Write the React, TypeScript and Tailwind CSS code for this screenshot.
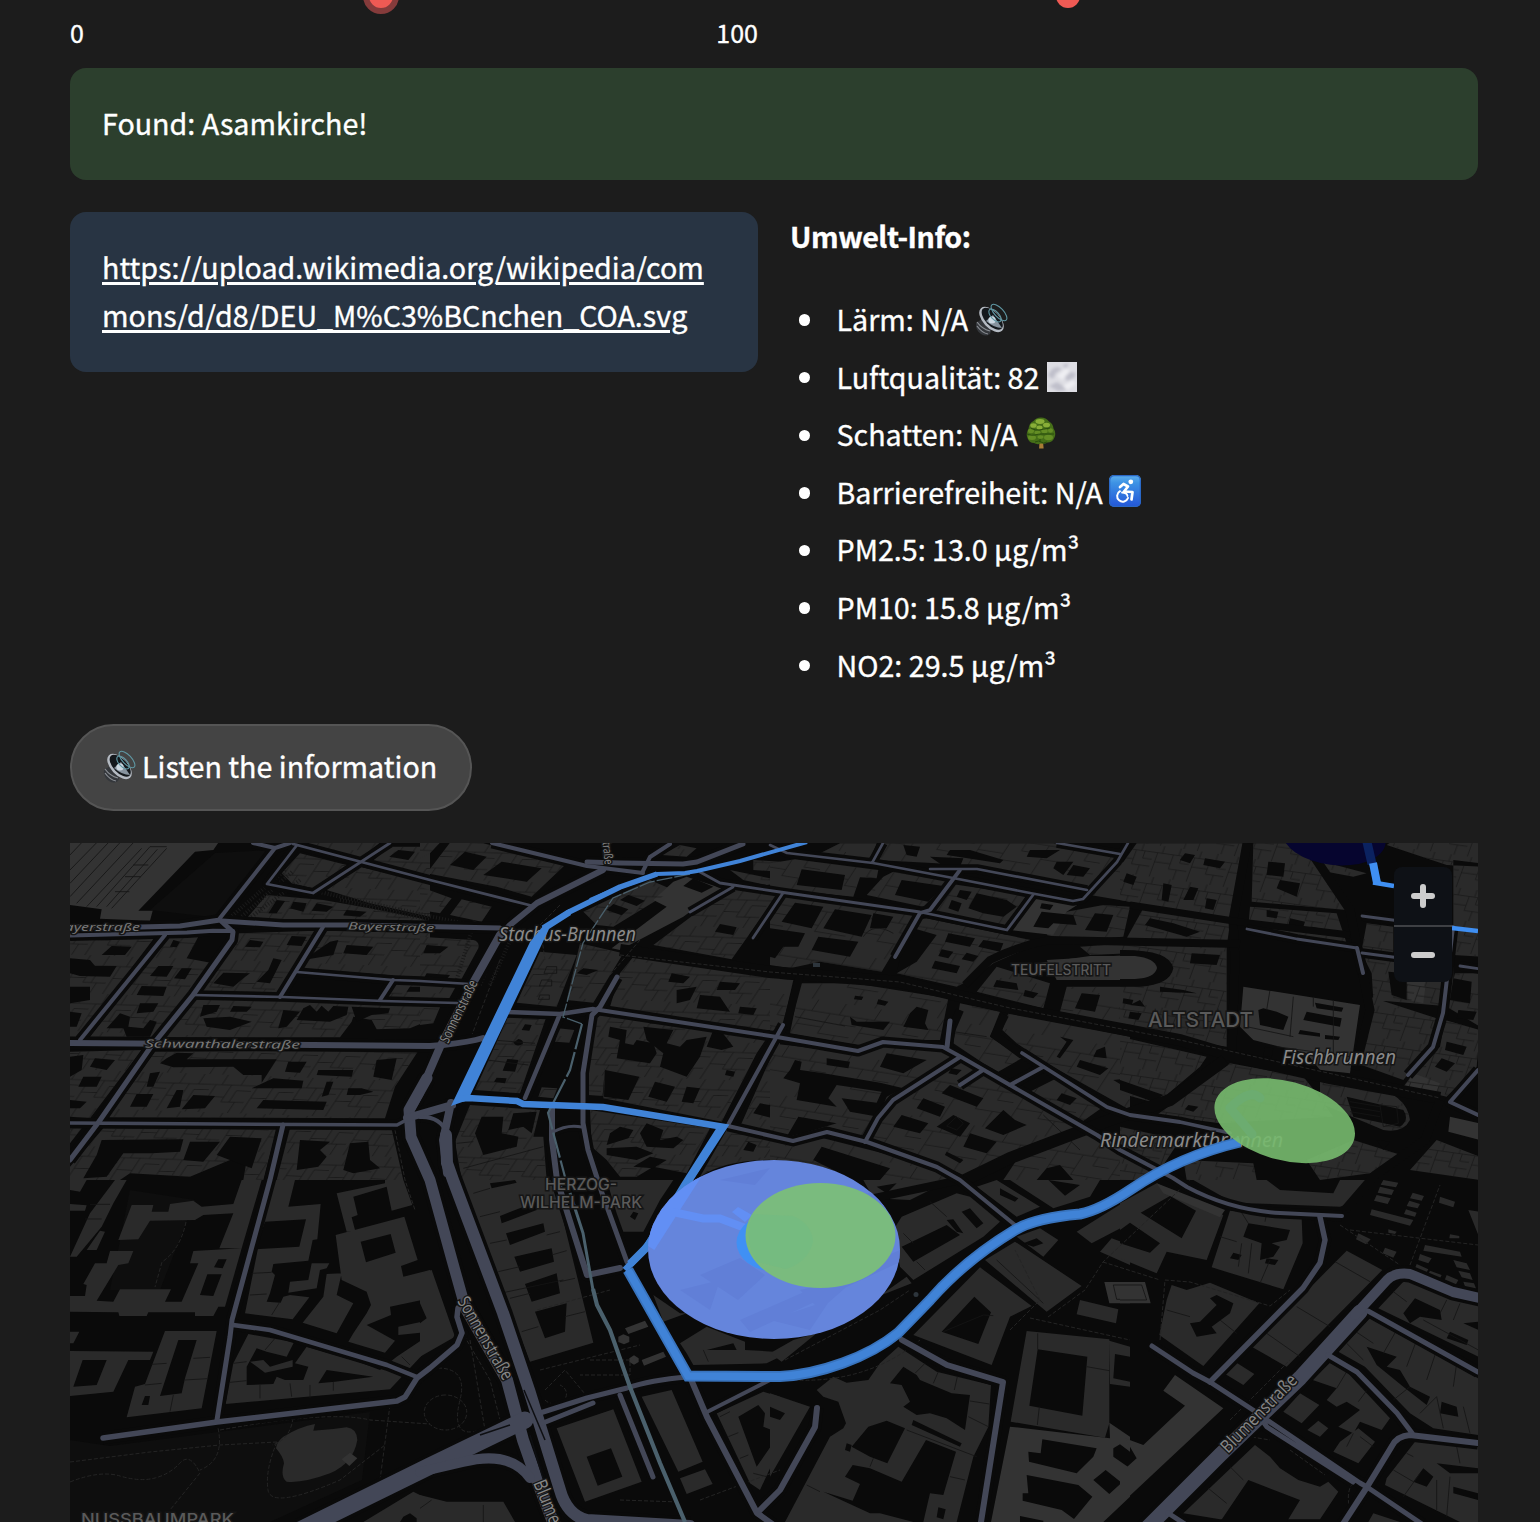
import type { ReactNode } from 'react';

interface Tile {
    x: number;
    y: number;
    parcels: string;
    blocks: string;
    bright?: string;
    courts: string;
    seams?: string;
}

interface Road {
    d: string;
    w: number;
}

// Building footprints, one entry per map tile, three units to a pixel
const TILES: Tile[] = [
    {
        x: 70,
        y: 840,
        parcels: 'url(#parcels-west)',
        blocks:
            'M690 40L830 75L730 145L665 130L635 100ZM700 8L930 8L870 55L800 40L720 25ZM870 80L1080 130V230L900 190L770 150ZM960 20L1080 20V110L905 65ZM590 165L760 180L900 205L1050 235L1080 245H850L530 235ZM0 300L250 297L25 598H0ZM295 290L385 280L470 285V310L290 590L60 590ZM500 280L735 272L625 460L380 455ZM765 272L1080 280V415L690 385ZM985 425L1080 425V475L945 478ZM365 475L840 485L1080 490V540L1020 565L920 568L905 540L850 530L845 545L810 592L290 592ZM0 635L215 630L60 835L0 830ZM255 635L1045 632L975 740L945 835L115 832ZM100 865L620 868L580 1020H520L530 960H480L360 1010L180 1000L150 1020H0V980ZM660 865L965 868L1000 1020H620ZM0 865H35L0 910Z',
        bright: 'M0 8L445 8L430 30L375 35L205 212L248 212L240 242L90 236L95 208L0 195Z',
        courts:
            'M985 30L1035 35L1015 60L958 50ZM620 180L645 183L620 220H595ZM670 185L710 190L700 215L660 205ZM740 190L790 200L770 215L725 212ZM830 210L890 215L870 230L820 226ZM125 318L185 320L165 345H95ZM0 355L60 360L75 378H140L120 410L30 408L0 400ZM0 440H60V480L0 490ZM0 515L35 520L20 560H0ZM310 300L330 305L320 322L300 320ZM390 280L480 285L475 310L430 370L350 355L375 310ZM265 378H310L290 410L240 408ZM335 385H365L345 418L312 415ZM215 438L290 440L280 468L200 465ZM210 490H265L250 515L200 520ZM150 520L180 530L175 560L220 565L240 540L260 545L240 590H170L160 565H110ZM540 300L580 305L570 322L525 320ZM665 288L710 290L695 318L650 315ZM460 398L540 400L520 415L490 440L430 430ZM610 355L635 360L600 430L560 425L595 390ZM830 315L910 320L890 345L820 340ZM780 305L805 300L790 345L700 360ZM1020 440H1080V455H1010ZM400 495H450L440 515L390 530ZM490 498L545 500L530 515H480ZM400 535L480 530L545 545L480 570L410 560ZM640 510L690 515L650 560L625 565ZM700 505L720 495L740 515L755 497L775 515L790 498L835 500L830 525L780 545L680 540ZM845 500L960 505L955 520L905 525L860 545ZM40 710H95L80 740H25ZM0 650L40 645L35 690L0 710ZM0 780L50 785L30 805H0ZM75 655L135 660L110 690L60 680ZM290 655L320 638L370 640L350 658L620 658L575 728L575 705L520 705L490 680L310 682L270 670ZM655 665H710L690 698L645 695ZM610 715L700 722L695 745L545 745ZM745 690H850L845 710L740 705ZM770 725H790L775 765L755 770ZM835 745H875L910 755L870 765H830ZM920 660L980 655L965 720L910 710ZM320 750H340L330 800L290 805ZM370 765L435 768L405 805L335 808ZM200 762H250L230 800H180ZM580 780L770 785L760 810L560 805ZM240 700L270 695L250 740L230 740ZM95 900L340 898L330 935L245 940H160L110 1010L40 1015L80 945ZM360 905H450L400 965L340 960ZM480 890L575 895L545 985L440 945ZM690 900L780 905L750 930L770 950L745 980L680 990ZM840 910L895 905L900 960L930 985L850 1000L820 990Z',
        seams:
            'M80 200L240 20M110 200L262 28M125 205L290 25M240 20H290M190 75H235M165 110H212M135 155H178M0 170L150 8M20 190L190 8M50 200L215 25M0 45L35 8M0 90L80 8M0 130L115 8',
    },
    {
        x: 420,
        y: 840,
        parcels: 'url(#parcels-west)',
        blocks:
            'M90 8L190 10L400 65L435 75L335 170L230 140L20 100ZM0 8H60L30 40L0 55ZM0 140L95 175L60 220L0 210ZM125 178L215 200L185 245L90 225ZM0 290L160 300Q180 305 175 325L120 425L0 420ZM0 430L110 435L85 480L0 475ZM0 490H65L40 550L0 555ZM360 335L470 345L410 500L290 488ZM480 310L610 340L520 488L440 480ZM690 120L760 150L580 260L530 255L490 215ZM930 145L1075 160L935 358L700 315L820 225ZM1000 60L1080 65V95L1000 90ZM930 90L1050 115L1080 130L1040 135L970 120ZM780 15L830 25L800 50L725 45ZM640 350L900 385L1080 415V570H980L570 500L600 400ZM270 518L380 528L300 760L165 750ZM415 565L463 570L448 608L405 605ZM365 742L412 745L400 775L355 770ZM530 520L1040 595L1010 640L905 845L550 775L555 680L548 768L505 765V645L515 570ZM150 795L360 810L340 890H370L380 1020H125L105 905ZM510 810L870 865L800 1000L700 980L650 1010H600L560 960L515 920ZM920 870L1080 900V960Q920 955 840 1010ZM1080 590V900L960 860ZM1080 240V290L1050 240Z',
        bright: 'M800 110L905 145L790 230L600 330L575 325L740 200L700 180L760 125Z',
        courts:
            'M135 35L200 50L160 90L90 75ZM245 65L365 85L320 125L190 105ZM20 315L85 320L60 340H10ZM20 400L90 405L80 418H10ZM490 385L535 390L500 405L470 400ZM625 165L675 182L650 198L600 180ZM580 192L625 208L605 226L560 210ZM820 115L880 140L845 158L790 138ZM900 252L950 262L940 285L885 275ZM755 400L810 410L790 430L745 425ZM770 450L830 440L810 480L770 490ZM840 465L900 470L930 515L830 505ZM900 425L960 430L945 450H890ZM960 500L1010 505L1000 525L955 520ZM315 553L335 555L328 572L305 570ZM262 657L295 660L285 695L248 692ZM230 713L260 715L255 730L222 725ZM295 597Q312 600 308 612Q290 622 280 608ZM570 560L620 570L615 610L640 615L650 600L700 610L710 640L690 670L590 655L600 600L565 590ZM670 560L760 570L740 610L780 620L800 600L860 590L840 650L800 710L720 680L730 640L680 600ZM555 690L658 710L625 780L552 770ZM705 725L765 740L740 785L685 770ZM880 570L905 575L940 620L905 630L860 620ZM920 690L945 695L940 710L915 705ZM800 740L840 745L820 790L785 785ZM185 830H250L245 880L295 890L290 920L190 945L165 880ZM280 820L350 815L335 880L310 860L265 870ZM600 860L640 870L625 895L560 915L570 880ZM680 850L730 870L720 900L770 890L790 900L760 925L680 920L660 880ZM560 925L650 920L700 940L650 960L560 945ZM640 980L690 950L740 960L700 985ZM985 905L1010 915L1000 935L970 930ZM1020 790L1080 800V840L1000 820Z',
        seams: 'M380 380H410V400H372ZM365 420H395V438H358ZM360 465H388V478H355ZM215 600L345 610M200 660L325 675M110 910L160 905M130 985L370 920',
    },
    {
        x: 770,
        y: 840,
        parcels: 'url(#parcels-mid)',
        blocks:
            'M340 10L850 10L1050 45L950 150L640 85L500 70L315 60ZM210 10H320L300 60L150 40ZM75 58L325 90L320 115L270 112L250 170L0 145V70ZM380 90L540 120L460 200L290 165L340 110ZM40 165L440 220L335 395L150 365L60 385L0 375V230ZM530 130L770 165L700 265L490 220ZM1050 70L1080 60V185L960 165ZM890 215L1000 195L1080 200L1060 290L900 300L830 285ZM470 235L830 310L760 330L670 370L610 415L560 440L380 400L440 240ZM90 430L250 430L535 475L510 600H400L270 615L60 580ZM0 415L70 420L40 550L0 580ZM570 490L690 515L660 590L755 655L685 695L640 670L550 610ZM715 520L880 550L1080 590V810L830 670L740 610L697 570ZM680 380L840 430L820 505L620 455ZM890 440H1080V560L870 515ZM0 610L265 640L350 615L480 620L545 650L370 770L280 890L170 860L70 890L0 870ZM570 665L715 740L985 885L580 1005L500 970L300 905L330 840L390 775ZM760 765L860 715L1000 800L930 850ZM740 960L960 870L1080 940V1020H700ZM0 910L160 895L500 980L560 1020H250Q180 970 0 960ZM930 320L1080 310V340L960 345Z',
        bright: 'M800 165L930 190L890 215L850 285L720 270ZM830 360L1080 345V420H860Z',
        courts:
            'M400 15L450 20L440 50L410 45ZM480 50L580 55L570 80L520 78ZM780 30H870L830 55L770 50ZM860 65H910L880 105L850 85ZM910 75L960 85L940 110L890 105ZM540 30H600L700 60L690 70L530 45ZM95 88L225 105L215 150L80 135ZM395 120L520 138L475 185L375 165ZM75 188L160 200L125 265L35 245ZM195 208L305 225L275 290L160 265ZM145 290L265 305L240 350L125 330ZM0 265L105 280L85 320H40L15 355L0 350ZM310 220L370 230L350 265L300 265ZM570 150L605 155L590 180L560 170ZM620 160L710 180L740 200L700 230L640 220L595 205ZM545 180L575 190L565 215L535 205ZM815 215L910 225L920 255L850 250L835 265L790 260ZM975 220L1030 225L1010 275L945 270ZM815 190L850 195L840 210L810 205ZM430 265L500 285L440 365L380 400L395 330ZM535 280L615 295L600 320L525 305ZM515 328L550 335L535 355L505 348ZM495 362L570 378L560 400L485 385ZM590 338L625 348L610 365L575 358ZM640 300L700 310L690 335L625 320ZM240 530L260 545L360 545L340 570L245 555ZM440 500L475 510L465 550L475 570L400 560L420 520ZM325 478L355 485L345 497L320 492ZM255 467L280 470L275 480L252 478ZM930 660L1015 685L990 705L920 680ZM1030 720L1080 715V750ZM980 630L1005 620L1010 655L970 650ZM870 590L910 600L870 655L860 650L890 605ZM680 420L740 430L745 450L670 440ZM765 450L805 460L790 475L760 468ZM935 460L990 465L975 515L915 505ZM170 655L240 665L235 685L170 675ZM60 690L75 660L95 665L90 690L160 700L330 728L400 745L350 770L325 830L240 815L215 775L320 788L335 755L200 735L175 775L200 800L80 780L90 730L40 715ZM350 640L470 660L400 700L330 680ZM85 830L200 850L100 880L50 890ZM540 735L640 775L620 800L515 760ZM460 775L525 800L510 830L440 805ZM395 825L475 850L450 880L370 860ZM550 825L600 850L570 890L500 860ZM700 810L735 840L770 855L700 885L645 865ZM600 880L680 905L650 940L580 920ZM530 935L580 960L570 970L525 945ZM875 760L920 775L900 795L860 780ZM545 685L575 690L560 705L535 700ZM830 985L870 975L910 1020H800ZM155 920L360 985L330 1020H250L130 960Z',
        seams: 'M75 530L225 558M280 290Q310 245 370 280M550 575L650 590M820 825L930 930M560 830L580 850L560 870L530 858Z',
    },
    {
        x: 1120,
        y: 840,
        parcels: 'url(#parcels-east)',
        blocks:
            'M50 10H370L330 235L80 195L0 180V80ZM400 10H540L630 130L680 210L395 185ZM390 200L650 220L680 310L385 260ZM70 205L330 250L320 320L20 295ZM0 310L150 315L320 320V620L0 570ZM740 250L820 260V340L725 330ZM730 350H1000V500L760 480L755 400ZM1000 60L1080 70V350L1000 345ZM1005 400H1080V560L980 500ZM750 470L950 535L930 620L850 720L710 670L720 580ZM975 540L1080 570L1070 680L980 770L850 740L880 700L960 620ZM0 590L260 650L240 680L110 790L0 760ZM330 670L550 710L590 760L640 830L300 850L110 825ZM600 715L740 735Q860 760 870 840Q850 880 790 870L600 790ZM700 900L860 950L750 1000L600 1020L560 960ZM190 960L400 970L410 1020H200ZM950 900L1080 950V1020L870 990ZM800 15L980 75L1080 80V8H810ZM590 60L740 100L700 110L620 95ZM0 860L180 900L100 1020H0Z',
        bright: 'M370 440L720 495L690 700L600 690L560 640L400 600L360 560ZM990 830L1080 850V900L985 875ZM860 400L920 410L910 490L865 480ZM880 700L960 730L940 780L850 745Z',
        courts:
            'M195 40L225 45L210 70L180 60ZM255 55L315 65L300 85L250 75ZM130 130L155 135L145 185L125 180ZM210 140L235 145L220 180H190ZM260 175L290 180L280 210L255 205ZM20 100L50 110L40 135L10 125ZM445 65L495 70L490 110L440 105ZM480 120L540 130L530 170L470 145ZM440 210L475 215L470 235L440 230ZM510 235L555 245L550 260L505 255ZM575 260L625 270L620 285L570 280ZM90 235L160 250L240 275L200 290L75 255ZM0 330Q150 328 160 385Q150 435 60 440H0ZM215 340L300 345L290 375L210 370ZM120 440L190 450L230 460L120 455ZM60 480L75 500L30 495ZM10 475L40 480L35 495L8 490ZM30 515L65 520L55 540L25 535ZM415 510L430 505L470 515L505 530L490 570L420 555ZM560 515L665 535L660 560L550 540ZM585 488L670 503L665 515L590 505ZM540 570L600 580V590L535 582ZM615 585L660 590L655 600L615 597ZM435 620L460 625L455 652L430 648ZM1000 415L1055 425L1050 490L990 480ZM1015 510L1070 515L1060 540L1010 535ZM805 395L860 400L860 480L815 465ZM980 605L1040 620L1030 645L975 630ZM965 655L1005 670L980 695L945 680ZM0 720L130 765L100 785L0 750ZM205 795L235 800L220 815L195 808ZM680 770L850 810Q870 840 840 860L700 830ZM770 900L810 905L790 930Z',
        seams: 'M450 450L440 510M520 470L510 590M580 470V500M640 480V640M380 560L520 590M470 620L690 650M690 785L780 800M690 800L780 815M690 815L780 830M780 795L830 800L835 850L790 860Z',
    },
    {
        x: 70,
        y: 1180,
        parcels: 'none',
        blocks:
            'M0 0H50L30 35L0 30ZM0 72L50 76L45 92H0ZM135 0H170L130 70L95 140L20 230H0L60 100ZM90 152L105 155L80 210H50ZM185 75H250L245 95H295L300 72L370 62L395 80L490 72L515 0H575L515 205H448L490 100L400 105L375 120L240 122L205 178L145 180ZM120 213H190L175 250L145 255L80 362L130 365L150 328H303L285 365H335L385 250H360L370 213L515 205L465 380H445L430 408H375V397H235L230 408H148L145 397L0 395V348H45L50 315L40 312L75 250H110ZM0 455H28L10 490H0ZM0 513L250 515L240 540H175L130 635L0 648ZM285 453H440L395 685L170 712L195 620L225 612ZM610 0H675L655 80L752 72L742 178L728 180L715 242L610 252L605 275L615 285L600 340L590 365L632 368L640 350L660 345L718 352L668 418L525 400L580 125ZM800 40L945 10V0H1000L1027 75L965 92L950 20L850 50L863 105L845 112L855 150L830 155ZM797 165L1003 110L1043 240L993 258L1000 290L1080 270V355L960 380L963 405L890 435L975 482L945 518L835 485L850 460L890 400L903 375L890 335L815 300ZM725 250H778L770 265L750 270L740 325L655 338L660 305L715 300ZM770 282L815 280L800 345L850 370L800 460L698 428L760 350ZM985 440L1080 420V455L985 465ZM535 462L672 487L650 530L590 515L560 505L530 560V615L610 612L620 590L645 600L700 600L715 560L675 550L710 500L865 545L930 570L980 530L1070 470L1080 500L960 628L467 672L490 550ZM540 545L580 540L600 560L668 540V560L585 578ZM735 732Q690 740 640 770Q620 785 618 805Q640 830 642 850Q630 890 650 905Q700 910 780 880Q850 850 862 780Q860 745 830 742Q780 750 730 752ZM880 1026L1030 935L1080 960V1026Z',
        bright: 'M840 818L862 835L838 858L815 838Z',
        courts:
            'M445 238H470L458 265L432 262ZM412 283H455L430 348L390 345ZM38 540H110L80 615L10 620ZM325 480H380L345 595L335 640L270 648ZM225 648H240L235 675H215ZM585 125L708 118L688 200L557 208ZM872 185L962 162L977 218L888 247ZM770 570L910 590L795 605L745 610ZM1000 1010L1020 1000L1040 1015V1026H990Z',
        seams: 'M245 553L290 550M370 535L420 532M225 615L275 610M345 600L412 596M310 645L300 695M490 550L530 545M480 607L530 602M570 615V655M660 610L665 650M720 615V655M790 605V632M540 345L590 342M545 280L605 277M630 365L605 405M615 475L585 510M60 73H120M45 117H95M995 530L1020 555M1050 480L1080 500',
    },
    {
        x: 420,
        y: 1180,
        parcels: 'none',
        blocks:
            'M120 0H400L520 488L330 545ZM0 280L35 270L105 470L0 530ZM410 745L580 688L665 905L495 965ZM665 650L755 630L848 845L775 875ZM780 895L855 868L878 912L800 942ZM890 700L1030 635L1080 650V800L1020 930L990 910ZM0 945L80 965H250L285 1026H0ZM780 490L860 440L975 485V510L1060 515L1080 530L1040 550L820 555L800 520ZM700 345L780 400H800L730 425ZM560 0H760L720 60L670 155H610L590 100Z',
        bright: 'M595 470L610 463L628 470L628 486L612 493L595 486ZM628 535L642 526L656 535V546L642 554L628 546ZM615 445L675 422L685 440L625 462ZM665 540L730 515L738 530L672 557Z',
        courts:
            'M210 10L285 0L290 8L215 25ZM240 108L350 65V90L245 130ZM258 160L370 130L375 155L270 195ZM283 230L395 205L402 245L300 275ZM315 312L410 280L420 340L335 365ZM345 395L440 370L435 455L375 475ZM0 370L20 415L0 430ZM500 830L573 805L607 890L533 917ZM955 710L1015 675L1035 700L1030 740L1080 760L1010 860ZM860 510L940 490L950 510ZM640 95L655 100L645 120L630 110Z',
        seams:
            'M160 40L210 25M180 110L240 95M210 190L260 180M235 275L300 260M270 355L330 340M305 455L355 440M380 165L420 155M395 225L440 212M420 305L465 295M435 410L495 395M240 340L430 300M900 710L930 695M925 770L955 758M960 835L985 825M1000 880L1040 890M190 975V1026M0 985L35 960M850 510L865 545',
    },
    {
        x: 770,
        y: 1180,
        parcels: 'none',
        blocks:
            'M280 0H540L420 60L310 55ZM370 150L395 110L560 40L600 50L690 125L640 170L430 300L390 260ZM340 340L410 290L425 310L260 375ZM630 262L785 378L720 410L665 555L430 465ZM645 240L735 185L935 318L830 395ZM740 170L810 145L865 180L820 230ZM620 20L680 0L810 80L740 110ZM720 0H990L960 50L850 85ZM920 155L1080 55V130L965 190ZM1025 175L1080 195V255L990 215ZM930 360L1045 388L1038 430L920 403ZM770 453L1018 478V730L1005 773L722 725ZM1018 482L1080 500V620L1020 612ZM140 630L190 590L230 608L295 600L330 550L385 500L500 575L663 615L655 740L610 830L560 1026H460L480 940L520 945L558 815L468 780L395 905L300 865L248 855L225 890L270 912L248 962L160 935L300 1000L330 1000L430 1026H45L180 770L220 745L228 730L205 665L160 650ZM0 640L120 680L0 890ZM0 520L70 480L140 460L35 545Z',
        bright: 'M1003 306H1080V370H1018ZM720 740L1020 775L1018 728L1080 770V950L1000 1026H663Z',
        courts:
            'M320 20L380 10L350 40ZM395 200L530 135L570 165L430 245ZM575 95L600 85L640 130L620 145ZM530 120L550 118L580 160L560 155ZM613 350L663 397L625 492L515 455ZM760 190L800 175L820 190L790 200ZM690 25L745 55L735 65L690 45ZM835 0L930 15L885 47ZM803 508L952 530L937 707L778 677ZM1035 522L1080 530V605L1030 595ZM817 778L980 805L970 830L920 880L777 845L775 815L812 820ZM1030 805L1050 793L1080 815V865L1030 830ZM970 900L1007 870L1055 908L1018 942ZM770 885L925 915L967 950L912 1017L875 990L758 962V940H775ZM750 1008L820 1022V1026H750ZM295 740L350 722L405 745L352 850L300 830L245 800ZM400 560L440 585L450 600L545 640L600 645L585 750L530 715L480 700L440 705L400 680L420 665L395 615L360 610ZM430 720L575 790L570 800L425 735ZM230 790L245 795L240 815L225 810ZM505 982L527 988L520 1018L500 1012ZM0 680L45 700L30 720L0 710Z',
        seams:
            'M520 455L640 405L670 407M803 460V508M950 560L1018 572M808 680L802 735M435 580L465 550M490 610L505 575M553 630L562 590M600 663L658 672M595 710L655 740M540 890L585 900M300 860L310 835M110 915L150 935M410 750L620 830M400 160L430 190M440 245L465 270M480 65L530 110M680 240L820 370M1030 315H1080M1030 315L1040 358H1080',
    },
    {
        x: 1120,
        y: 1180,
        parcels: 'none',
        blocks:
            'M0 70L110 10L310 105L260 240L140 215L110 280L0 235ZM220 0H740L690 70L660 80L340 68ZM330 92L545 115L548 190L490 328L275 262ZM155 315L200 330L270 308L418 370L250 558L118 465L140 360ZM680 212L787 270L500 560L395 500ZM345 545L403 582L370 615L312 580ZM855 300L1075 360V530L775 385ZM750 415L1075 595V765L940 745L870 700L735 560L655 515ZM630 548L680 575L810 715L785 750L720 725L700 760L655 740L720 690L680 665L650 680L620 660L650 625L578 600ZM540 640L598 675L545 730L490 695ZM595 722L625 745L600 770L562 750ZM660 785L715 745L765 785L715 850L640 815ZM405 795L450 830L480 865L535 900L600 920L625 905L655 935L600 1018H300L190 1000ZM885 785L1075 800V1026H1020L795 915L800 895ZM755 88L880 120L870 137L750 105ZM715 160L752 178L738 193L708 178ZM795 203L830 215L820 233L788 220ZM915 195L1020 215L1025 230L910 212ZM960 50L1005 65L1000 82L957 68ZM1045 90L1075 95V165ZM790 0L835 8L828 22L782 14ZM780 20L822 30L815 45L773 38ZM770 45L812 55L803 72L762 62ZM878 38L912 48L905 62L870 55ZM868 62L900 72L893 85L860 78ZM858 88L890 98L885 110L852 102ZM900 222L935 235L925 250L895 240ZM890 252L925 268L915 285L883 270ZM930 272L965 285L955 305L920 290ZM980 285L1015 300L1005 318L972 305ZM1000 240L1040 250L1050 270L1010 262ZM1015 272L1050 280L1058 300L1025 292ZM1030 305L1062 310L1072 335L1038 328ZM760 1000L840 1026H745ZM805 148L830 155L825 162L805 158ZM990 163L1018 168V175H988Z',
        bright: 'M0 306H75L92 370H0ZM110 10L315 90L300 112L130 40ZM165 585L310 685L0 975V880L50 835L15 775L70 795L195 677L130 632Z',
        courts:
            'M62 98L150 48L228 92L185 175ZM0 150L30 128L120 190L90 218L0 190ZM440 0H660L640 40L480 30ZM385 130L510 150L500 180L455 190L480 200L460 230L420 240L425 190L370 170ZM340 218L365 225L355 240L330 235ZM440 235L475 240L465 255L435 250ZM270 355L290 345L340 370L330 400L275 440L290 460L230 470L210 430L240 425L290 375ZM885 355L960 390L965 420L900 410L870 430L850 400ZM990 455L1045 480L1040 495L980 475ZM1030 430L1075 425V450ZM740 500L770 510L830 530L800 560L840 570L870 620L930 650L920 675L850 620L770 555ZM965 665L1010 680L1015 710L960 700ZM385 900L540 960L500 1026H300ZM950 850L1075 865V880H990ZM910 865L940 890L920 920L880 905ZM1000 920L1075 940V960L1000 940Z',
        seams:
            'M645 245L750 305M530 380L630 440M440 460L540 530M0 315H65L80 360H0M360 90L385 130M440 100L435 125M300 170L350 185M365 190L355 260M395 190L385 280M450 240L420 310M140 390L210 410M300 420L350 460M820 335L860 365M980 360L960 400M1020 370L1000 420M910 420L1075 510M700 450L760 490M830 450L790 520M890 480L860 560M950 510L920 600M1010 550L1000 620M680 490L730 540M820 660L870 620M900 700L950 650L970 745M680 575L650 625M745 625L715 665M265 925L320 970M330 860L370 900M880 830L860 820M820 870L880 905M1010 800L1020 850M950 900V990M850 950L900 880M990 890L980 1010M1030 680L1050 760M700 760L680 800M720 770L760 800',
    },
];

const ROADS: Road[] = [
    { w: 4, d: 'M275 848L220 918M253 843L275 848L290 843' },
    { w: 5, d: 'M70 927H140L180 926L220 920L233 932L232 940L193 995L150 1048L98 1123L70 1160' },
    { w: 5, d: 'M222 921L283 925H350L500 928' },
    { w: 4, d: 'M70 935.5L187 932.6L213 930.7L233 931' },
    { w: 4, d: 'M165 935L80 1040M323 927L280 997M393 980L380 1000' },
    { w: 2.6, d: 'M193 995L283 997L383 1001L457 1003M297 972L393 980L420 981L470 984' },
    { w: 6, d: 'M70 1043L430 1046L443 1045Q470 1042 483 1038' },
    { w: 3.5, d: 'M70 1123L397 1125L410 1118' },
    { w: 5, d: 'M283 1125L270 1180L232 1320L230 1337L217 1420' },
    { w: 5.5, d: 'M103 1438L217 1422L397 1401L405 1397L417 1378L430 1368L457 1345L462 1333L457 1317L458 1308' },
    { w: 4.5, d: 'M233 1325L270 1330L387 1365L417 1377' },
    { w: 2.8, d: 'M297 845L267 884L313 893L390 843M293 844L430 880L533 906' },
    { w: 5, d: 'M743 844L697 862L683 864L620 863L587 862' },
    { w: 4, d: 'M492 843L587 866L643 873M670 844L650 857L642 873' },
    { w: 6, d: 'M603 870L537 903L510 925L497 940' },
    { w: 8, d: 'M500 935L473 983L440 1047L420 1093L408 1115' },
    { w: 11, d: 'M427 1078L409 1110L411 1137L430 1180L452 1260L464 1303L507 1380' },
    { w: 12, d: 'M464 1305L507 1380L523 1440L537 1480L553 1522' },
    { w: 8, d: 'M407 1118L452 1105M451 1103L443 1140L447 1173' },
    { w: 4, d: 'M420 1117Q440 1116 447 1133' },
    { w: 12, d: 'M446 1135L447 1163L453 1180L503 1313L530 1393L560 1490Q567 1515 587 1520L690 1526' },
    { w: 17, d: 'M300 1530L430 1466L525 1420' },
    { w: 10, d: 'M420 1472L463 1462Q510 1450 530 1478' },
    { w: 5, d: 'M540 1413L587 1398L627 1388Q650 1380 688 1377M543 1423L593 1403' },
    { w: 4.5, d: 'M560 1014L525 1098M505 1012L560 1014L593 1009' },
    { w: 4, d: 'M593 1009L777 1037L858 1051L883 1042L943 1047L963 1058L1097 1135L1120 1150L1173 1178L1187 1187Q1230 1210 1280 1213L1342 1216' },
    { w: 5, d: 'M617 977L600 1007L592 1015L583 1073V1123L588 1150L602 1193L627 1262' },
    { w: 6, d: 'M552 1107V1140L557 1180L587 1275L620 1268' },
    { w: 3, d: 'M553 1132Q567 1124 582 1127' },
    { w: 5, d: 'M620 1395L653 1477' },
    { w: 6, d: 'M690 1377L707 1417L757 1513L775 1526M757 1513L780 1490L815 1427L817 1408' },
    { w: 4, d: 'M707 1412L770 1380M783 1025L728 1125M728 1126L780 1138L793 1141L827 1132L867 1142L937 1167L960 1180L1015 1225' },
    { w: 4, d: 'M960 1057L893 1100L878 1118L865 1142M1043 1067L1010 1085M983 1070L960 1085' },
    { w: 5, d: 'M950 1021L947 1047' },
    { w: 3.8, d: 'M1022 1053L1107 1107L1130 1115L1180 1122L1230 1133' },
    { w: 2.8, d: 'M1247 929L1297 939L1357 948M1460 966L1480 969M1362 916L1400 921M1362 953L1400 958' },
    { w: 4, d: 'M1357 948L1363 973M1453 927L1443 1013L1433 1047L1408 1075M1478 1070L1450 1102L1478 1115' },
    { w: 2.6, d: 'M770 845L787 853L873 863L953 878L1030 893L1073 901L1083 899L1117 862L1128 843M930 869H977L1087 890M883 843L872 863M1057 843L1120 854' },
    { w: 2.8, d: 'M700 872L720 883L780 892L920 912L1007 930L1033 895M783 893L753 938M733 887L690 912' },
    { w: 3.8, d: 'M960 870L930 910L920 913L895 957' },
    { w: 5.5, d: 'M1320 1217L1325 1240L1320 1263L1303 1288L1210 1382' },
    { w: 5, d: 'M1152 1346L1193 1373L1210 1382L1253 1410L1267 1420L1360 1483L1367 1487L1422 1524M1262 1420L1267 1427L1353 1482' },
    { w: 15, d: 'M1145 1530L1220 1455L1300 1378L1360 1312' },
    { w: 10, d: 'M1355 1315L1387 1280Q1395 1272 1410 1274L1453 1292L1480 1298' },
    { w: 5, d: 'M1368 1311L1478 1372M1328 1355L1357 1372L1397 1413L1412 1433M1168 1513L1185 1524' },
    { w: 6, d: 'M1478 1443L1410 1435Q1397 1436 1392 1446L1367 1487L1343 1524' },
    { w: 6, d: 'M902 1340L947 1365L1003 1382L981 1522' },
];

const CORRIDORS: Road[] = [
    { w: 12, d: 'M620 950L770 972L900 982L1010 1008L1180 1040L1240 1058L1330 1078L1440 1098' },
    { w: 9, d: 'M1247 843L1233 920L1235 960L1232 1050' },
    { w: 9, d: 'M1305 843L1350 910L1370 1010L1355 1070' },
    { w: 8, d: 'M965 985L990 960Q1020 945 1050 940L1240 944' },
    { w: 8, d: 'M960 1010L947 1040M800 975L785 1030M1005 1015L995 1035L1022 1055' },
    { w: 12, d: 'M965 1180L1010 1158L1110 1120L1170 1100L1225 1060' },
    { w: 7, d: 'M1130 905L1240 922L1350 935' },
    { w: 9, d: 'M1440 1100L1425 1140L1375 1175L1345 1210' },
    { w: 8, d: 'M770 1220L960 1180' },
];

const PATHS =
    'M560 905L540 925L545 960M640 940L610 975M620 955L770 972L900 982L1010 1008L1180 1040L1440 1098M455 1320L490 1380L500 1420M470 1340L485 1430M420 1370Q470 1360 460 1400T480 1430M445 1395A17 14 0 1 0 446 1430A17 14 0 1 0 445 1395M70 1462L150 1452L220 1445L277 1442M70 1482Q100 1470 120 1476T155 1478T180 1463T200 1473L170 1510M218 1428Q225 1460 200 1470M277 1442Q265 1470 268 1490T340 1480L385 1445M293 1418Q290 1440 272 1445M220 1430Q330 1410 370 1420L430 1424M390 1405L380 1480M186 1222Q180 1250 162 1262L155 1287M537 1310L610 1290M540 1370L600 1355L640 1345M545 1390L565 1370L590 1400M590 1360H630V1375H580M545 1400A12 10 0 1 0 560 1385M785 1360L880 1310L910 1290M920 1340Q860 1390 770 1378M1010 1330L1040 1300L1015 1250M1030 1318L1130 1340M1048 1317L1085 1290L1103 1262L1190 1180M1103 1262L1160 1280M1160 1340L1165 1280L1190 1282L1270 1306L1290 1290M1340 1225L1400 1265M1350 1230L1478 1245M1410 1265L1440 1185M1230 1420L1290 1360M1240 1435L1270 1440M1350 1510Q1345 1490 1355 1480M620 1500L680 1502M700 1500L780 1470M1290 1450L1325 1475M500 960L470 1040M395 1130L405 1180L415 1210M440 880L520 900M470 890L530 910';

const RAILS = 'M285 870L232 916M292 872L240 918M300 880L250 918M310 890L470 925M340 900L430 920M455 985L475 920M480 985L505 925M490 985L515 930';

const ROUTE_WEST = 'M458 1099L468 1098L517 1101L523 1104L603 1107L724 1127L650 1241L643 1251L625 1270';
const ROUTE_MAIN =
    'M628 1270L688 1376L780 1376.500Q810 1375 843 1363T898 1333L930 1300Q965 1260 1015 1230Q1035 1218 1080 1214Q1100 1210 1130 1190Q1180 1156 1240 1142';

function SpeakerIcon({ className }: { className: string }) {
    return (
        <svg viewBox="0 0 34 34" className={className}>
            <path d="M2 20l6-4 10 10-2 5q-4 3-9 0-6-4-5-11z" fill="#34373b" />
            <path d="M3 23q5 7 11 8M3 19q5 7 13 9" stroke="#8a8e94" strokeWidth="1.200" fill="none" />
            <ellipse cx="17.500" cy="16.500" rx="8.500" ry="15.500" transform="rotate(-43 17.500 16.500)" fill="#b4bac2" />
            <ellipse cx="18.200" cy="15.700" rx="6.900" ry="13.600" transform="rotate(-43 18.200 15.700)" fill="#14181c" />
            <path d="M12 18L19 12L28 25Q20 25 12 18z" fill="#87939e" />
            <circle cx="18" cy="17" r="3.600" fill="#cbd7e0" />
            <g fill="none" stroke="#5f97a3" strokeWidth="1.100">
                <ellipse cx="21" cy="12.500" rx="4" ry="8" transform="rotate(-43 21 12.500)" />
                <ellipse cx="25" cy="9.500" rx="4.500" ry="10.500" transform="rotate(-43 25 9.500)" />
            </g>
        </svg>
    );
}

function FogIcon() {
    return (
        <svg viewBox="0 0 30 30" className="ml-2 size-[30px] self-center">
            <defs>
                <filter id="fog" x="-20%" y="-20%" width="140%" height="140%">
                    <feGaussianBlur stdDeviation="1.8" />
                </filter>
                <clipPath id="fog-clip">
                    <path d="M0 0h30v30H0z" />
                </clipPath>
            </defs>
            <path d="M0 0h30v30H0z" fill="#dedee4" />
            <g clipPath="url(#fog-clip)">
                <g filter="url(#fog)">
                    <path d="M1 14q3-9 10-9l4 2-6 4-3 6zM18 15l5-5 6 1-2 5-7 3zM2 24l8-4 5 3 5 5-9 1zM15 3l7-2-3 6z" fill="#c0c0cb" />
                    <path d="M10 14l9-8 4 3-8 9zM16 24l10-6 3 4-9 6z" fill="#efeff3" />
                </g>
            </g>
        </svg>
    );
}

function TreeIcon() {
    return (
        <svg viewBox="0 0 30 33" className="ml-2 h-[33px] w-[30px] -translate-y-px self-center">
            <path d="M13.500 24h3.500l.6 7.500h-4.500z" fill="#a87c35" />
            <path d="M15 .5q5 0 8 4 4 2 4.500 7 3 4 1 9-2 5-7 5-3 2-6.500 1-4 1.500-7-.5-5 0-6.500-5-2-5 1-9Q3 6 7.500 4 10 .5 15 .5z" fill="#456e18" />
            <g fill="#88ae38">
                <ellipse cx="14" cy="4.500" rx="4.500" ry="2.400" />
                <ellipse cx="7.500" cy="8.500" rx="3.200" ry="2.300" />
                <ellipse cx="20.500" cy="8" rx="3.500" ry="2.300" />
                <ellipse cx="13.500" cy="10.500" rx="3" ry="2" />
            </g>
            <g fill="#638d24">
                <ellipse cx="5" cy="14" rx="3" ry="2.200" />
                <ellipse cx="11.500" cy="15.500" rx="3" ry="2" />
                <ellipse cx="18.500" cy="14" rx="3.200" ry="2.200" />
                <ellipse cx="24.500" cy="13.500" rx="2.500" ry="2.300" />
                <ellipse cx="6" cy="20.500" rx="4" ry="2.500" />
                <ellipse cx="14.500" cy="20" rx="3" ry="1.800" />
                <ellipse cx="22.500" cy="20.500" rx="4.500" ry="2.800" />
            </g>
            <path d="M1 17q5 2 8 1t6-1q6 0 13 0M5 11.500q5 2 8 1.500t11-2M14 22v3M9 25q4-2 6 0t6 0" stroke="#264a0c" strokeWidth=".9" fill="none" />
        </svg>
    );
}

function WheelchairIcon() {
    return (
        <svg viewBox="0 0 32 32" className="ml-[6px] size-8 -translate-y-px self-center">
            <defs>
                <linearGradient id="sign" x1="0" y1="0" x2="0" y2="1">
                    <stop offset="0" stopColor="#5fb0ee" />
                    <stop offset=".25" stopColor="#3d92e4" />
                    <stop offset="1" stopColor="#2355d8" />
                </linearGradient>
            </defs>
            <rect width="32" height="32" rx="5" fill="url(#sign)" />
            <rect x=".7" y=".7" width="30.600" height="30.600" rx="4.500" fill="none" stroke="#2a66c4" strokeWidth="1.200" />
            <circle cx="21.800" cy="6.800" r="2.400" fill="#fff" />
            <g fill="none" stroke="#fff" strokeLinecap="round" strokeLinejoin="round">
                <path d="M11 12L14.500 9L19 11.500L15 16.500L23.500 17L22.500 24.500" strokeWidth="2.700" />
                <path d="M11 16.200A5.600 5.600 0 1 0 19 23" strokeWidth="2" />
                <path d="M13 17.500Q18 17.500 18.500 21" strokeWidth="1.800" />
            </g>
        </svg>
    );
}

function InfoItem({ children }: { children: ReactNode }) {
    return (
        <li className="flex h-[51.200px] items-center">
            <span className="mt-px mr-[26.500px] ml-[8.500px] size-[11.500px] rounded-full bg-white" />
            {children}
        </li>
    );
}

interface StreetLabelProps {
    x: number;
    y: number;
    length: number;
    angle?: number;
    scaleY?: number;
    size: number;
    children: string;
}

function StreetLabel({ x, y, length, angle = 0, scaleY = 1, size, children }: StreetLabelProps) {
    return (
        <text transform={`translate(${x} ${y}) rotate(${angle}) scale(1 ${scaleY})`} fontSize={size} textLength={length} lengthAdjust="spacingAndGlyphs">
            {children}
        </text>
    );
}

function CityMap() {
    return (
        <svg viewBox="70 843 1408 679" width="1408" height="679" className="block bg-[#0a0a0a]">
            <defs>
                <pattern id="parcels-west" width="130" height="112" patternUnits="userSpaceOnUse" patternTransform="skewX(-32) rotate(2)">
                    <path d="M0 30H130M30 0V30M88 0V30M12 30V112M60 30V80M60 80H130M102 80V112M12 66H60M85 46V80M85 46H130" fill="none" stroke="#151515" strokeWidth="2" />
                </pattern>
                <pattern id="parcels-mid" width="190" height="150" patternUnits="userSpaceOnUse" patternTransform="rotate(9) skewX(-24)">
                    <path d="M0 36H190M40 0V36M124 0V36M20 36V150M96 36V100M96 100H190M148 100V150M20 80H96M142 36V64H190" fill="none" stroke="#161616" strokeWidth="2" />
                </pattern>
                <pattern id="parcels-east" width="112" height="96" patternUnits="userSpaceOnUse" patternTransform="rotate(8) skewX(-12)">
                    <path d="M0 22H112M24 0V22M74 0V22M10 22V96M58 22V66M58 66H112M82 66V96M10 50H58M84 22V44H112" fill="none" stroke="#151515" strokeWidth="2" />
                </pattern>
                <clipPath id="start-area">
                    <ellipse cx="774" cy="1249.500" rx="126" ry="89.500" />
                </clipPath>
            </defs>

            {/* Parks */}
            <path d="M70 1440L110 1446L370 1412L362 1480L270 1522H70ZM130 1190L195 1200L160 1290H110ZM215 853L150 910L220 918L270 850Z" fill="#0e0e0e" />

            {/* Buildings */}
            {TILES.map((tile) => (
                <g key={`${tile.x}-${tile.y}`} transform={`translate(${tile.x} ${tile.y}) scale(.33333)`}>
                    <path d={tile.blocks} fill="#2a2a2a" />
                    {tile.bright && <path d={tile.bright} fill="#333" />}
                    <path d={tile.blocks} fill={tile.parcels} />
                    <path d={tile.courts} fill="#0a0a0a" />
                    {tile.seams && <path d={tile.seams} fill="none" stroke="#141414" strokeWidth="2.500" />}
                </g>
            ))}
            <g fill="none" stroke="#0a0a0a">
                {CORRIDORS.map((c) => (
                    <path key={c.d} d={c.d} strokeWidth={c.w} />
                ))}
            </g>
            <path d="M1040 963L1090 956H1135Q1155 958 1157 968Q1155 978 1135 979H1060Z" fill="#333" />
            <path d={PATHS} fill="none" stroke="#242424" strokeWidth="1" strokeDasharray="4 2" />
            <path d={RAILS} fill="none" stroke="#1a1a1a" strokeWidth="4" strokeDasharray="1 2" />

            {/* Roads: black casing first, then the fill */}
            <g fill="none" stroke="#0a0a0a" strokeLinejoin="round">
                {ROADS.map((r) => (
                    <path key={r.d} d={r.d} strokeWidth={r.w + 7} />
                ))}
            </g>
            <g fill="none" stroke="#434757" strokeLinejoin="round" strokeLinecap="round">
                {ROADS.map((r) => (
                    <path key={r.d} d={r.d} strokeWidth={r.w} />
                ))}
            </g>
            <path d="M524 1390L545 1440M530 1435L545 1485M480 1435L510 1425" fill="none" stroke="#0e0f12" strokeWidth="1.500" />

            {/* Stream */}
            <g fill="none" stroke="#4a606c">
                <path d="M690 874L650 882L613 898L583 943L563 1017L582 1024" strokeWidth="1.300" strokeDasharray="16 2" />
                <path d="M582 1024L570 1070L548 1113L565 1177" strokeWidth="2.200" strokeDasharray="26 3" />
                <path d="M570 1193L583 1233L593 1290" strokeWidth="3" />
                <path d="M593 1289L597 1305L610 1330L630 1387L660 1463L685 1522" strokeWidth="4.200" />
            </g>
            <circle cx="916" cy="1294.500" r="2.500" fill="#2d353c" />
            <path d="M813 963h7v4h-7z" fill="#2d353c" />

            {/* Labels */}
            <g fill="#858585" stroke="#151515" strokeWidth="3" paintOrder="stroke" fontFamily="'Noto Sans', sans-serif">
                <g fontStyle="italic" fill="#777">
                    <StreetLabel x={55} y={931} length={85} size={13} scaleY={0.8}>Bayerstraße</StreetLabel>
                    <StreetLabel x={348} y={929.500} length={86} size={13} angle={1.500} scaleY={0.8}>Bayerstraße</StreetLabel>
                    <StreetLabel x={145} y={1047.500} length={155} size={14} angle={0.400} scaleY={0.8}>Schwanthalerstraße</StreetLabel>
                </g>
                <StreetLabel x={448} y={1044} length={68} size={14} angle={-64}>Sonnenstraße</StreetLabel>
                <StreetLabel x={602} y={838} length={27} size={12} angle={84}>straße</StreetLabel>
                <StreetLabel x={457} y={1301} length={93} size={18} angle={60}>Sonnenstraße</StreetLabel>
                <StreetLabel x={533} y={1483} length={100} size={19} angle={68}>Blumenstraße</StreetLabel>
                <StreetLabel x={1228} y={1454} length={101} size={18} angle={-46}>Blumenstraße</StreetLabel>
                <g fontStyle="italic" fill="#8a8a8a">
                    <StreetLabel x={499} y={940.500} length={137} size={19}>Stachus-Brunnen</StreetLabel>
                    <StreetLabel x={1282} y={1063.500} length={114} size={19}>Fischbrunnen</StreetLabel>
                    <StreetLabel x={1100} y={1147} length={183} size={19}>Rindermarktbrunnen</StreetLabel>
                </g>
            </g>
            <g fill="#5a5a5a" stroke="#151515" strokeWidth="3" paintOrder="stroke" fontFamily="Inter, sans-serif" fontWeight="500">
                <StreetLabel x={1148} y={1027} length={105} size={20}>ALTSTADT</StreetLabel>
                <StreetLabel x={1011} y={974.500} length={100} size={14}>TEUFELSTRITT</StreetLabel>
                <StreetLabel x={545} y={1189.500} length={72} size={16}>HERZOG-</StreetLabel>
                <StreetLabel x={520} y={1208} length={122} size={16}>WILHELM-PARK</StreetLabel>
                <StreetLabel x={81} y={1525} length={153} size={16}>NUSSBAUMPARK</StreetLabel>
            </g>

            {/* Route */}
            <g fill="none" stroke="#4083d7" strokeLinejoin="miter">
                <path d="M807 842L740 861L697 871L685 873L657 874L620 887L590 900" strokeWidth="4" />
                <path d="M657 874L620 887L567 913L543 928" strokeWidth="5.500" strokeLinejoin="round" />
                <path d="M569 909L543 926L530 942L451 1106L468 1100L540 948L549 929L571 915Z" fill="#4083d7" stroke="none" />
                <path d={ROUTE_WEST} strokeWidth="6.500" />
                <path d="M720 1130L685 1185L648 1246L630 1264" strokeWidth="8" />
                <path d={ROUTE_MAIN} strokeWidth="11" stroke="#3873bd" />
                <path d={ROUTE_MAIN} strokeWidth="7.500" />
            </g>

            {/* Start and stop markers */}
            <ellipse cx="774" cy="1249.500" rx="126" ry="89.500" fill="#6585dc" />
            <g clipPath="url(#start-area)">
                <path d="M700 1275L740 1258L765 1275L738 1300ZM800 1290L860 1275L820 1310ZM720 1180L770 1168L755 1185ZM770 1320L830 1300L810 1330ZM680 1290L720 1280L710 1310ZM840 1200L880 1190L890 1230ZM740 1320L900 1250L900 1262L750 1332Z" fill="#617fd7" />
                <path d="M698 1168L648 1246" fill="none" stroke="#628ff4" strokeWidth="15" />
                <path d="M660 1212H673L703 1218.500H720L745 1228" fill="none" stroke="#628ff4" strokeWidth="8" />
                <path d="M732 1212L738 1207L752 1215L745 1222Z" fill="#628ff4" />
            </g>
            <ellipse cx="775" cy="1242.500" rx="38.500" ry="29" fill="#4090f4" />
            <ellipse cx="820.500" cy="1235.500" rx="75" ry="52.500" fill="#7abb7e" />
            <path d="M793 1216Q812 1224 813 1242Q808 1262 786 1269Q764 1264 756 1261Q744 1240 752 1214Z" fill="#74bb82" opacity=".7" />
            <ellipse cx="1284.700" cy="1120.700" rx="72" ry="39.500" transform="rotate(15 1284.700 1120.700)" fill="#77ba6e" fillOpacity=".9" />
            <path d="M1260 1098Q1250 1088 1230 1108L1252 1134" fill="none" stroke="#6cac70" strokeWidth="9" strokeLinecap="round" strokeLinejoin="round" />
            <ellipse cx="1334" cy="837" rx="52" ry="28" transform="rotate(7 1334 837)" fill="#06052f" />
            <path d="M1367 842L1372 864" stroke="#0b2260" strokeWidth="9" />
            <path d="M1373 863L1377 883" stroke="#3f8ff2" strokeWidth="8" />
            <path d="M1373 882.500L1394 886M1452 928L1478 931" stroke="#3f8ff2" strokeWidth="4.500" />
        </svg>
    );
}

function ZoomControl() {
    return (
        <div className="absolute top-6 right-[26px] flex w-[58px] flex-col overflow-hidden rounded-lg bg-[#0e1116]">
            <button className="flex h-[60px] items-center justify-center border-b-2 border-[#3e4044]">
                <svg viewBox="0 0 24 24" className="size-6" stroke="#ccc" strokeWidth="6" strokeLinecap="round">
                    <path d="M12 3v18M3 12h18" />
                </svg>
            </button>
            <button className="flex h-[55px] items-center justify-center">
                <svg viewBox="0 0 24 24" className="size-6" stroke="#ccc" strokeWidth="6" strokeLinecap="round">
                    <path d="M3 12h18" />
                </svg>
            </button>
        </div>
    );
}

export default function App() {
    return (
        <div className="h-[1522px] w-[1540px] overflow-hidden bg-[#1c1c1c] pr-[62px] pl-[70px] font-['Noto_Sans_CJK_SC','Noto_Sans',sans-serif] text-[28.650px] text-white [-webkit-text-stroke:0.35px_white]">
            {/* Slider thumbs */}
            <div className="flex h-[15px] overflow-hidden">
                <div className="-mt-[22px] ml-[293px] size-9 rounded-full border-[6px] border-[#853b3b] bg-[#ef5a54]" />
                <div className="-mt-4 ml-[656.500px] size-6 rounded-full bg-[#ef5a54]" />
            </div>
            <div className="flex h-[53px] w-[688px] justify-between text-[25px] leading-[35px]">
                <span>0</span>
                <span>100</span>
            </div>

            <div className="rounded-2xl bg-[#2c3f2d] px-8 pt-[31px] pb-[33px] leading-[48px]">Found: Asamkirche!</div>

            <div className="mt-8 grid h-[512px] grid-cols-2 gap-8">
                <div className="self-start rounded-2xl bg-[#283443] px-8 pt-[31px] pb-[33px] leading-[48px]">
                    <a className="underline decoration-[2.500px] underline-offset-[3px]">
                        https://upload.wikimedia.org/wikipedia/com
                        <br />
                        mons/d/d8/DEU_M%C3%BCnchen_COA.svg
                    </a>
                </div>
                <div>
                    <p className="mb-[33px] h-[49px] leading-[48px] font-bold tracking-[-0.45px]">Umwelt-Info:</p>
                    <ul className="flex flex-col gap-[6.400px]">
                        <InfoItem>
                            Lärm: N/A
                            <SpeakerIcon className="ml-[6px] size-[34px]" />
                        </InfoItem>
                        <InfoItem>
                            Luftqualität: 82
                            <FogIcon />
                        </InfoItem>
                        <InfoItem>
                            Schatten: N/A
                            <TreeIcon />
                        </InfoItem>
                        <InfoItem>
                            Barrierefreiheit: N/A
                            <WheelchairIcon />
                        </InfoItem>
                        <InfoItem>PM2.5: 13.0 µg/m³</InfoItem>
                        <InfoItem>PM10: 15.8 µg/m³</InfoItem>
                        <InfoItem>NO2: 29.5 µg/m³</InfoItem>
                    </ul>
                </div>
            </div>

            <button className="flex h-[87px] w-[402px] items-center rounded-full border-2 border-[#555] bg-[#444] pb-0.5 pl-[30px] whitespace-nowrap">
                <SpeakerIcon className="mr-[6px] size-[34px]" />
                Listen the information
            </button>

            <div className="relative mt-8 h-[679px]">
                <CityMap />
                <ZoomControl />
            </div>
        </div>
    );
}
